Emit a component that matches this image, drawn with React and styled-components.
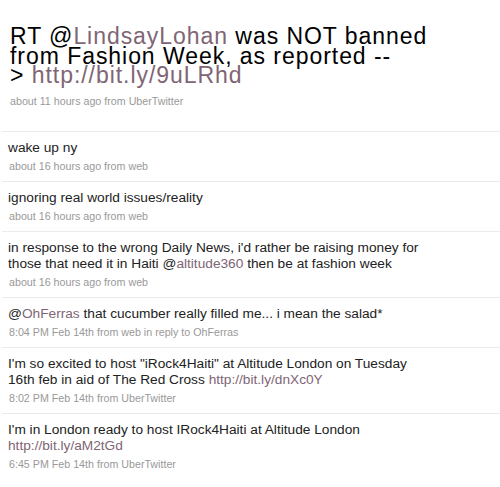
import React from 'react'
import styled, { createGlobalStyle } from 'styled-components'

const GlobalStyle = createGlobalStyle`
  html, body {
    margin: 0;
    padding: 0;
    background: #ffffff;
  }
  body {
    font-family: 'Liberation Sans', Arial, sans-serif;
    color: #222;
  }
`

const LINK = '#806575'

const Page = styled.div`
  width: 498px;
  padding-left: 2px;
`

const Permalink = styled.div`
  padding: 27px 8px 22px 8px;
`

const BigText = styled.div`
  font-size: 23px;
  line-height: 19.5px;
  letter-spacing: 0.95px;
  color: #000;
`

const Meta = styled.div`
  font-size: 10.7px;
  line-height: 15px;
  color: #999;
  margin-top: ${props => props.gap || 3}px;
  padding-left: ${props => (props.shift === undefined ? 1 : props.shift)}px;
`

const Link = styled.a`
  color: ${LINK};
  text-decoration: none;
`

const Timeline = styled.ol`
  list-style: none;
  margin: 0;
  padding: 0;
`

const Row = styled.li`
  border-top: 1px solid #ebebeb;
  padding: 8px 6px 7px 6px;
`

const Text = styled.div`
  max-width: 425px;
  font-size: 13.7px;
  line-height: 16px;
  color: #222;
`

const tweets = [
  { text: ['wake up ny'], meta: 'about 16 hours ago from web' },
  { text: ['ignoring real world issues/reality'], meta: 'about 16 hours ago from web' },
  {
    text: [
      "in response to the wrong Daily News, i'd rather be raising money for those that need it in Haiti ",
      { at: 'altitude360' },
      ' then be at fashion week'
    ],
    meta: 'about 16 hours ago from web'
  },
  {
    text: [{ at: 'OhFerras' }, ' that cucumber really filled me... i mean the salad*'],
    meta: '8:04 PM Feb 14th from web in reply to OhFerras'
  },
  {
    text: [
      'I\'m so excited to host "iRock4Haiti" at Altitude London on Tuesday 16th feb in aid of The Red Cross ',
      { url: 'http://bit.ly/dnXc0Y' }
    ],
    meta: '8:02 PM Feb 14th from UberTwitter'
  },
  {
    text: ["I'm in London ready to host IRock4Haiti at Altitude London ", { url: 'http://bit.ly/aM2tGd' }],
    meta: '6:45 PM Feb 14th from UberTwitter'
  }
]

const renderPart = (part, i) => {
  if (typeof part === 'string') return <React.Fragment key={i}>{part}</React.Fragment>
  if (part.at) {
    return (
      <React.Fragment key={i}>
        @<Link href="#">{part.at}</Link>
      </React.Fragment>
    )
  }
  return (
    <Link key={i} href="#">
      {part.url}
    </Link>
  )
}

export default function App() {
  return (
    <Page>
      <GlobalStyle />
      <Permalink>
        <BigText>
          RT @<Link href="#">LindsayLohan</Link> was NOT banned
          <br />
          from Fashion Week, as reported --
          <br />
          &gt; <Link href="#">http://bit.ly/9uLRhd</Link>
        </BigText>
        <Meta gap={8} shift={-1}>about 11 hours ago from UberTwitter</Meta>
      </Permalink>
      <Timeline>
        {tweets.map((t, i) => (
          <Row key={i}>
            <Text>{t.text.map(renderPart)}</Text>
            <Meta>{t.meta}</Meta>
          </Row>
        ))}
      </Timeline>
    </Page>
  )
}
